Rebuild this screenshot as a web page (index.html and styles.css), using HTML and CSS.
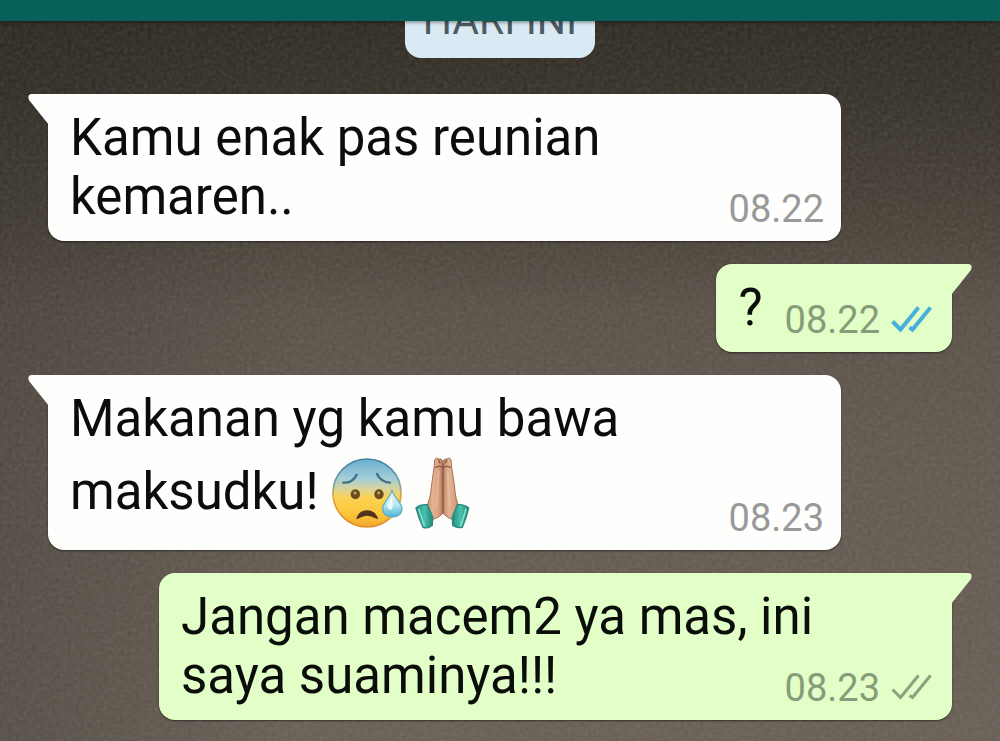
FILE: index.html
```html
<!DOCTYPE html>
<html lang="id">
<head>
    <meta charset="utf-8">
    <meta name="viewport" content="width=device-width, initial-scale=1">
    <title>Chat</title>
    <link rel="stylesheet" href="styles.css">
</head>
<body>

    <header class="top-bar"></header>

    <main class="chat">
        <div class="date">HARI INI</div>

        <div class="message received">
            <p class="text">Kamu enak pas reunian<br>kemaren..</p>
            <time class="time">08.22</time>
        </div>

        <div class="message sent short">
            <p class="text">?</p>
            <time class="time">08.22</time>
            <svg class="ticks read" viewBox="0 0 41 28" role="img" aria-label="Read">
                <path d="M1.5 15.5L9.5 23.5L27.5 1.5M18.5 21.5L21.5 23.5L39.5 1.5"/>
            </svg>
        </div>

        <div class="message received">
            <p class="text">Makanan yg kamu bawa<br>maksudku! <svg class="emoji" viewBox="33 29 216 216" role="img" aria-label="Anxious face with sweat">
                    <defs>
                        <linearGradient id="face" x1="0" y1="0" x2="0" y2="1">
                            <stop offset="0" stop-color="#69aed0"/>
                            <stop offset=".28" stop-color="#a2cdd8"/>
                            <stop offset=".44" stop-color="#d9d49b"/>
                            <stop offset=".56" stop-color="#fbd256"/>
                            <stop offset=".8" stop-color="#fdc83a"/>
                            <stop offset="1" stop-color="#f2a52c"/>
                        </linearGradient>
                        <linearGradient id="rim" x1="0" y1="0" x2="0" y2="1">
                            <stop offset="0" stop-color="#417f9f"/>
                            <stop offset=".35" stop-color="#75a3aa"/>
                            <stop offset=".55" stop-color="#e0a43c"/>
                            <stop offset="1" stop-color="#df8d2b"/>
                        </linearGradient>
                        <linearGradient id="drop" x1="0" y1="0" x2="0" y2="1">
                            <stop offset="0" stop-color="#eefbff"/>
                            <stop offset=".55" stop-color="#b5e6f3"/>
                            <stop offset="1" stop-color="#48b4d3"/>
                        </linearGradient>
                    </defs>
                    <circle cx="141" cy="137" r="102" fill="url(#face)" stroke="url(#rim)" stroke-width="5"/>
                    <path d="M70 106Q98 107 110 82M171 80Q183 105 210 106" fill="none" stroke="#3d7188" stroke-width="7" stroke-linecap="round"/>
                    <ellipse cx="106" cy="141" rx="14" ry="15" fill="#6c4a20"/>
                    <ellipse cx="177" cy="141" rx="14" ry="15" fill="#6c4a20"/>
                    <circle cx="105" cy="137" r="5" fill="#b99756"/>
                    <circle cx="176" cy="137" r="5" fill="#b99756"/>
                    <path d="M110 210Q119 189 141 189Q164 189 173 210Q176 219 166 213Q141 198 117 213Q107 219 110 210Z" fill="#54331d"/>
                    <path d="M216 130C209 152 188 166 188 184C188 200 201 209 217 209C233 209 246 200 246 184C246 167 223 152 216 130Z" fill="url(#drop)" stroke="#65afc0" stroke-width="4"/>
                    <path d="M216 150Q201 168 202 180Q205 188 215 187Q221 180 216 150Z" fill="#fff" opacity=".8"/>
                </svg><svg class="emoji" viewBox="260 29 216 216" role="img" aria-label="Folded hands">
                    <defs>
                        <linearGradient id="skin" x1="0" y1="0" x2="1" y2="0">
                            <stop offset="0" stop-color="#bd8366"/>
                            <stop offset=".35" stop-color="#e2b493"/>
                            <stop offset=".7" stop-color="#d9a482"/>
                            <stop offset="1" stop-color="#b8785f"/>
                        </linearGradient>
                        <linearGradient id="cuff" x1="0" y1="0" x2="1" y2="0">
                            <stop offset="0" stop-color="#238d7f"/>
                            <stop offset=".5" stop-color="#49c2ae"/>
                            <stop offset="1" stop-color="#218776"/>
                        </linearGradient>
                    </defs>
                    <path d="M371 42Q366 32 358 35Q352 28 346 37L344 60L336 119Q333 156 321 179L340 217Q359 211 371 198Z" fill="url(#skin)" stroke="#a97459" stroke-width="3" stroke-linejoin="round"/>
                    <path d="M371 42Q375 32 383 35Q390 28 395 37L397 60L406 119Q408 156 420 179L400 217Q382 211 371 198Z" fill="url(#skin)" stroke="#a97459" stroke-width="3" stroke-linejoin="round"/>
                    <path d="M371 48V198M347 61Q358 53 371 61Q382 53 394 61M357 37L362 48M383 37L378 48" fill="none" stroke="#8c5844" stroke-width="4"/>
                    <path d="M358 70L352 180M384 70L391 180" fill="none" stroke="#edc4a3" stroke-width="6" opacity=".5"/>
                    <path d="M290 182Q301 170 324 172L340 209L339 234Q326 245 311 240Q298 213 290 182Z" fill="url(#cuff)" stroke="#2b897a" stroke-width="4"/>
                    <path d="M448 182Q435 170 414 172L399 209L400 234Q414 243 429 240Q441 213 448 182Z" fill="url(#cuff)" stroke="#2b897a" stroke-width="4"/>
                    <path d="M298 184Q305 204 315 236M440 184Q435 204 424 236" fill="none" stroke="#87ded0" stroke-width="5"/>
                </svg></p>
            <time class="time">08.23</time>
        </div>

        <div class="message sent">
            <p class="text">Jangan macem2 ya mas, ini<br>saya suaminya!!!</p>
            <time class="time">08.23</time>
            <svg class="ticks" viewBox="0 0 41 28" role="img" aria-label="Delivered">
                <path d="M1.5 15.5L9.5 23.5L27.5 1.5M18.5 21.5L21.5 23.5L39.5 1.5"/>
            </svg>
        </div>
    </main>

</body>
</html>
```
FILE: styles.css
```css
* {
    box-sizing: border-box;
}

body {
    margin: 0;
    min-height: 100vh;
    font-family: Roboto, sans-serif;
    /* paper grain over a dark to light wallpaper */
    background:
        url("data:image/svg+xml,%3Csvg xmlns='http://www.w3.org/2000/svg' width='300' height='300'%3E%3Cfilter id='n'%3E%3CfeTurbulence type='fractalNoise' baseFrequency='.25' numOctaves='3' stitchTiles='stitch'/%3E%3CfeColorMatrix type='saturate' values='0.1'/%3E%3C/filter%3E%3Crect width='300' height='300' filter='url(%23n)' opacity='.16'/%3E%3C/svg%3E"),
        linear-gradient(90deg, rgba(30, 28, 22, 0.25), transparent 30%),
        linear-gradient(#28251d, #322d25 13%, #453e34 30%, #574d44 42%, #5e554b 60%, #665c52);
}

.top-bar {
    position: sticky;
    top: 0;
    z-index: 1;
    height: 21px;
    background-color: #07605a;
    box-shadow: 0 1px 4px rgba(0, 0, 0, 0.5);
}

.chat {
    display: flex;
    flex-direction: column;
    gap: 23px;
    padding: 0 48px 20px;
}

.date {
    align-self: center;
    margin: -23px 0 13px;
    padding: 2px 18px 18px;
    border-radius: 16px;
    background-color: #d9eaf4;
    color: #4d5a61;
    font-size: 41px;
    line-height: 40px;
}

.message {
    position: relative;
    display: flex;
    align-items: flex-end;
    padding: 14px 17px 15px 22px;
    border-radius: 16px;
    box-shadow: 0 1px 2px rgba(0, 0, 0, 0.5);
}

.received {
    margin-right: 111px;
    border-top-left-radius: 0;
    background-color: #fefefc;
    color: #999;
}

.sent {
    margin-left: 111px;
    padding-right: 20px;
    border-top-right-radius: 0;
    background-color: #e1ffc7;
    color: #869c78;
}

.short {
    align-self: flex-end;
}

/* bubble tails */
.message::before {
    content: "";
    position: absolute;
    top: 0;
    width: 21px;
    height: 31px;
    background-color: inherit;
}

.received::before {
    right: calc(100% - 1px);
    clip-path: path("M3 0H21V31L1 6Q-1 1 3 0Z");
}

.sent::before {
    left: calc(100% - 1px);
    clip-path: path("M18 0H0V31L20 6Q22 1 18 0Z");
}

/* the last line may run beside the time, the first one above it */
.text {
    flex: 1;
    min-width: 0;
    margin: 0;
    color: #0a0d0a;
    font-size: 51px;
    line-height: 59px;
    white-space: nowrap;
}

.short .text {
    margin-right: 22px;
}

.time {
    font-size: 38px;
    line-height: 34px;
}

.ticks {
    flex: none;
    width: 41px;
    height: 28px;
    margin: 0 0 3px 11px;
    fill: none;
    stroke: #8da17e;
    stroke-width: 3;
}

.read {
    stroke: #45b0dc;
    stroke-width: 4;
}

.emoji {
    width: 72px;
    height: 72px;
    margin: 9px 3px 6px 0;
    vertical-align: -26px;
}
```
